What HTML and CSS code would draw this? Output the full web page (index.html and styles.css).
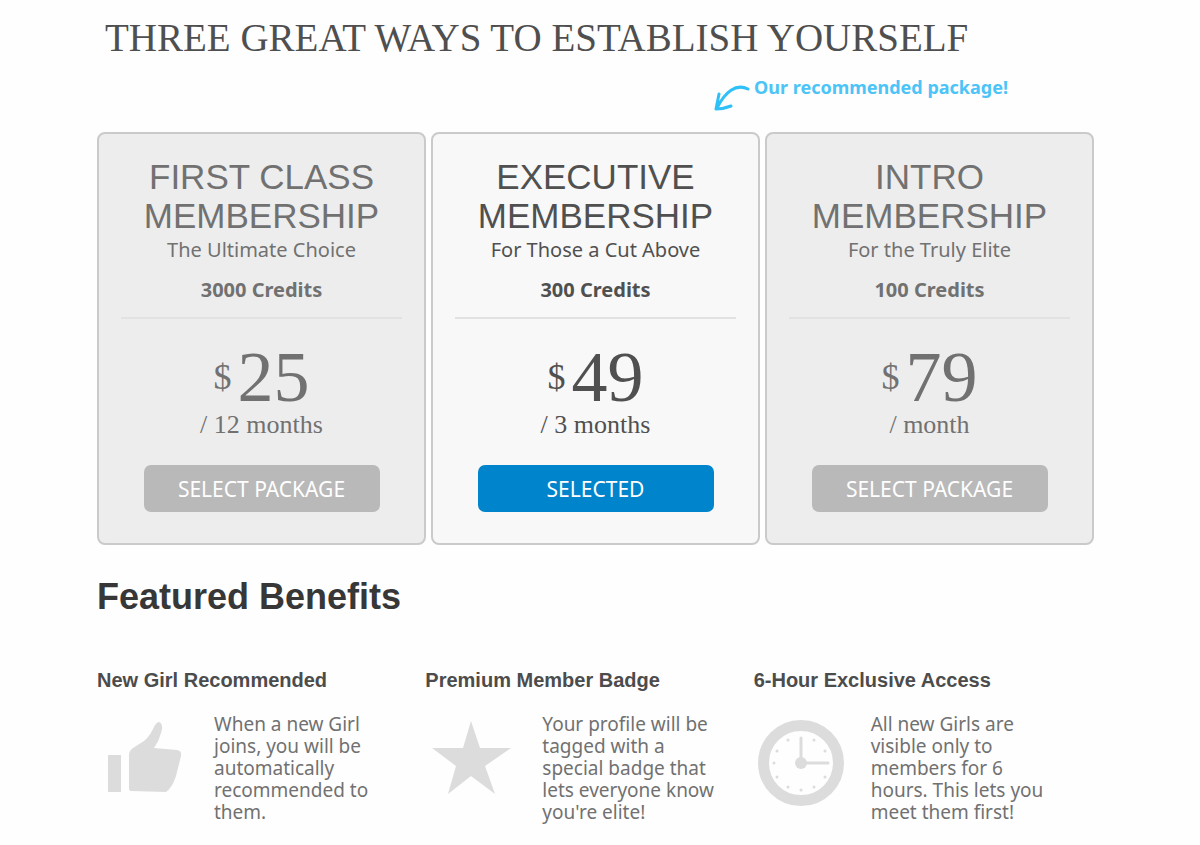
FILE: index.html
```html
<!DOCTYPE html>
<html lang="en">
    <head>
        <meta charset="UTF-8" />
        <meta name="viewport" content="width=device-width, initial-scale=1.0" />
        <title>Membership Packages</title>
        <link rel="stylesheet" href="styles.css">
    </head>
    <body>
        <div class="container">
            <h1 class="title">THREE GREAT WAYS TO ESTABLISH YOURSELF</h1>
            <div class="recommend">
                <svg class="arrow" viewBox="0 0 36 28" aria-hidden="true">
                    <path d="M34 5C22-1 11 8 3 24M5 10C4 15 3 20 2 25C7 25 12 24 17 22" />
                </svg>
                <span>Our recommended package!</span>
            </div>

            <div class="packages">
                <div class="package">
                    <h2>FIRST CLASS MEMBERSHIP</h2>
                    <p>The Ultimate Choice</p>
                    <p class="credits">3000 Credits</p>
                    <div class="price"><span>$</span>25</div>
                    <div class="period">/ 12 months</div>
                    <button type="button">SELECT PACKAGE</button>
                </div>
                <div class="package active">
                    <h2>EXECUTIVE MEMBERSHIP</h2>
                    <p>For Those a Cut Above</p>
                    <p class="credits">300 Credits</p>
                    <div class="price"><span>$</span>49</div>
                    <div class="period">/ 3 months</div>
                    <button type="button">SELECTED</button>
                </div>
                <div class="package">
                    <h2>INTRO MEMBERSHIP</h2>
                    <p>For the Truly Elite</p>
                    <p class="credits">100 Credits</p>
                    <div class="price"><span>$</span>79</div>
                    <div class="period">/ month</div>
                    <button type="button">SELECT PACKAGE</button>
                </div>
            </div>

            <h2 class="subtitle">Featured Benefits</h2>
            <div class="benefits">
                <div class="benefit">
                    <h3>New Girl Recommended</h3>
                    <div class="info">
                        <svg viewBox="0 0 94 94" aria-hidden="true">
                            <path d="M11 42h13v37H11zM32 42Q32 38 36 35L47 28Q52 24 56 16Q59 9 62 9Q67 11 64 20Q62 28 57 35L80 37Q85 38 84 43L79 63Q75 75 69 79L34 78Q32 78 32 75Z" />
                        </svg>
                        <p>When a new Girl joins, you will be automatically recommended to them.</p>
                    </div>
                </div>
                <div class="benefit">
                    <h3>Premium Member Badge</h3>
                    <div class="info">
                        <svg viewBox="0 0 94 94" aria-hidden="true">
                            <path d="M46 8L55 35H86L60 53L70 81L46 63L23 81L31 53L7 35H38Z" />
                        </svg>
                        <p>Your profile will be tagged with a special badge that lets everyone know you're elite!</p>
                    </div>
                </div>
                <div class="benefit">
                    <h3>6-Hour Exclusive Access</h3>
                    <div class="info">
                        <svg viewBox="0 0 94 94" aria-hidden="true">
                            <circle class="ring" cx="47" cy="50" r="37.5" />
                            <circle cx="47" cy="50" r="6" />
                            <path class="hands" d="M47 50V25M47 50H74" />
                            <path class="ticks" d="M34 27h0M60 27h0M23 38h0M71 38h0M20 50h0M23 64h0M71 64h0M34 74h0M60 74h0M47 77h0" />
                        </svg>
                        <p>All new Girls are visible only to members for 6 hours. This lets you meet them first!</p>
                    </div>
                </div>
            </div>
        </div>
    </body>
</html>
```

FILE: styles.css
```css
* {
    margin: 0;
    padding: 0;
    box-sizing: border-box;
}
body {
    background-color: #fefefe;
    color: #717171;
    font: 19px/22px "Noto Sans", sans-serif;
}
.container {
    padding: 16px 106px 20px 97px;
}
.title {
    padding-left: 8px;
    color: #4f4f4f;
    font: 39px/44px "Liberation Serif", serif;
}
.recommend {
    display: flex;
    justify-content: flex-end;
    gap: 4px;
    height: 72px;
    padding: 16px 86px 0 0;
    color: #4cc4f7;
    font-size: 18px;
    font-weight: bold;
}
.arrow {
    width: 36px;
    height: 28px;
    margin-top: 8px;
    fill: none;
    stroke: #2fc0f8;
    stroke-width: 3;
    stroke-linecap: round;
    stroke-linejoin: round;
}

.packages {
    display: grid;
    grid-template-columns: repeat(3, 1fr);
    gap: 5px;
}
.package {
    padding: 23px 22px 31px;
    border: 2px solid #cacaca;
    border-radius: 8px;
    background-color: #ededed;
    text-align: center;
}
.package h2 {
    padding: 0 16px;
    font: 35px/39px "Liberation Sans", sans-serif;
}
.package p {
    padding-top: 4px;
    font-size: 20px;
}
.package .credits {
    padding: 18px 0 16px;
    border-bottom: 2px solid #e2e2e2;
    font-weight: bold;
}
.price {
    display: flex;
    justify-content: center;
    align-items: center;
    gap: 6px;
    padding-top: 23px;
    font: 72px/70px "Liberation Serif", serif;
}
.price span {
    font-size: 36px;
}
.period {
    font: 26px/26px "Liberation Serif", serif;
}
.package button {
    width: 236px;
    max-width: 100%;
    height: 47px;
    margin-top: 27px;
    border: none;
    border-radius: 7px;
    background-color: #b9b9b9;
    color: #fff;
    font: 21px/24px "Noto Sans", sans-serif;
    cursor: pointer;
}
.package.active {
    background-color: #f8f8f8;
    color: #505050;
}
.package.active button {
    background-color: #0084cb;
}

.subtitle {
    padding: 30px 0 49px;
    color: #373737;
    font: bold 36px/44px "Liberation Sans", sans-serif;
}
.benefits {
    display: grid;
    grid-template-columns: repeat(3, 1fr);
    padding-right: 12px;
}
.benefit h3 {
    color: #4c4c4c;
    font: bold 20px/24px "Liberation Sans", sans-serif;
}
.info {
    display: flex;
    gap: 23px;
    padding: 21px 34px 0 0;
}
.info svg {
    flex: none;
    width: 94px;
    height: 94px;
    fill: #dcdcdc;
}
.info .ring {
    fill: none;
    stroke: #dcdcdc;
    stroke-width: 11;
}
.info .hands,
.info .ticks {
    stroke: #dcdcdc;
    stroke-width: 3;
    stroke-linecap: round;
}
```
